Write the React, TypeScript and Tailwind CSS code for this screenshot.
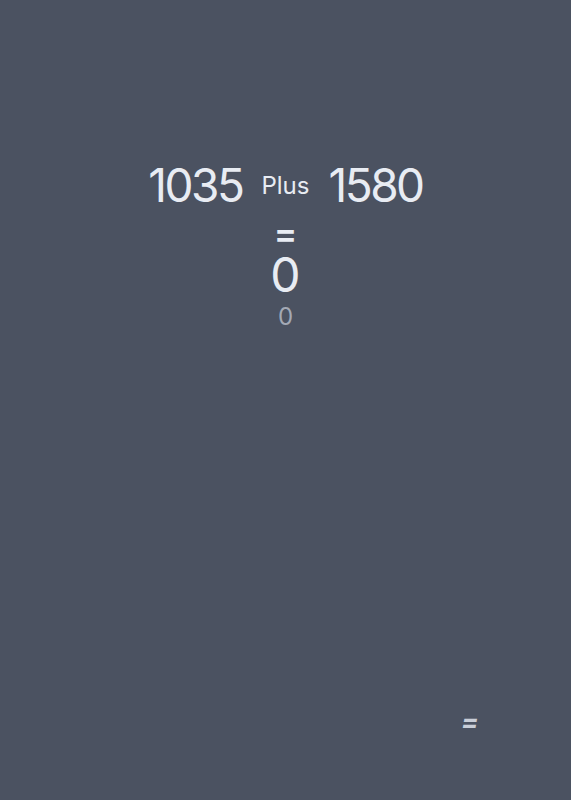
import React from 'react';

const App: React.FC = () => {
  return (
    <div
      className="relative min-h-screen w-full bg-[#4b5261] text-[#e8ecf3] flex flex-col items-center"
      style={{ fontFamily: '"Inter", "Liberation Sans", sans-serif' }}
    >
      {/* Sum line */}
      <div className="mt-[162px] flex items-center gap-[19px]">
        <span className="text-[46px] leading-none tracking-[-2.5px]">1035</span>
        <span className="text-[24px] leading-none mt-[2px]">Plus</span>
        <span className="text-[46px] leading-none tracking-[-2.5px]">1580</span>
      </div>
      <div className="mt-[8px] text-[35px] leading-none font-semibold">=</div>
      <div className="text-[48px] leading-none">0</div>
      <div className="mt-[6px] text-[24px] leading-none text-[#a3a9b5]">0</div>

      {/* Floating equals button */}
      <button className="absolute left-[461px] top-[709px] text-[26px] font-bold italic leading-none text-[#c9ced8]">
        =
      </button>
    </div>
  );
};

export default App;
